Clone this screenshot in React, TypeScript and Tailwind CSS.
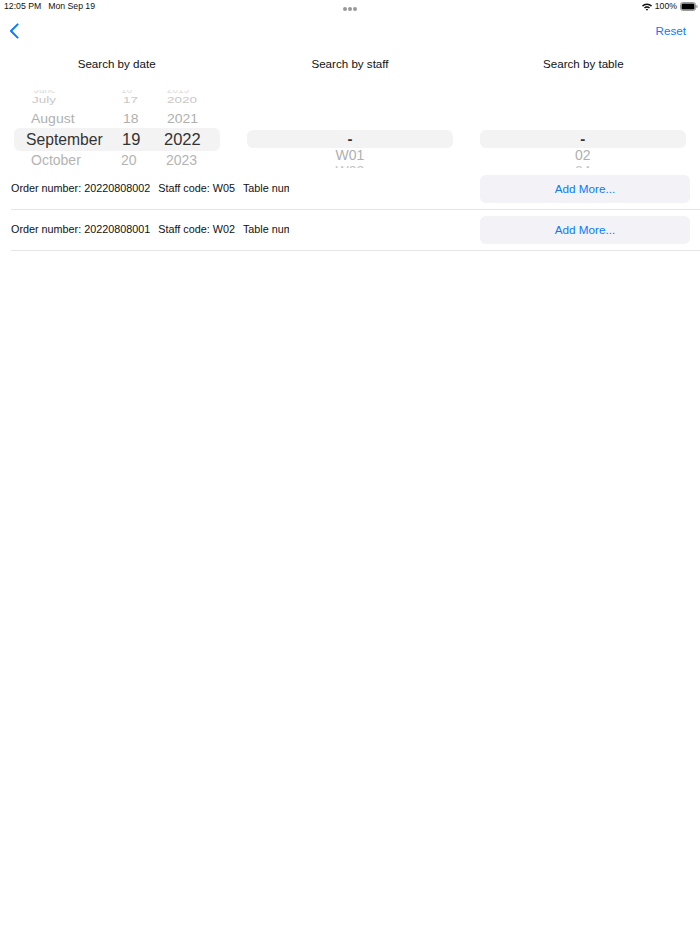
import React from "react";

const font = { fontFamily: '"Liberation Sans", Arial, sans-serif' };

function Chevron() {
  return (
    <svg width="10" height="16" viewBox="0 0 10 16" fill="none">
      <path d="M8.6 1.4 L2 8 L8.6 14.6" stroke="#0a7aff" strokeWidth="2" strokeLinecap="round" strokeLinejoin="round" />
    </svg>
  );
}

function Wifi() {
  return (
    <svg width="10" height="8" viewBox="0 0 10 8" fill="#111">
      <path d="M0 2.6C1.3 1.2 3 .4 5 .4s3.700.8 5 2.200L9 3.700C8 2.600 6.600 1.900 5 1.900S2 2.600 1 3.700Z" />
      <path d="M2 4.500C2.800 3.700 3.800 3.200 5 3.200s2.200.5 3 1.300L7 5.500C6.500 5 5.800 4.700 5 4.700S3.500 5 3 5.500Z" />
      <path d="M3.800 6.300C4.100 6 4.500 5.900 5 5.900s.9.1 1.200.4L5 7.700Z" />
    </svg>
  );
}

function Battery() {
  return (
    <svg width="18" height="9" viewBox="0 0 18 9">
      <rect x="0.5" y="0.5" width="15" height="8" rx="2" fill="none" stroke="#999" />
      <rect x="1.500" y="1.500" width="13" height="6" rx="1.200" fill="#000" />
      <rect x="16.300" y="3" width="1.200" height="3" rx="0.500" fill="#999" />
    </svg>
  );
}

function DateRow({ month, day, year, monthCls, dayCls, yearCls, rowCls }: { month: string; day: string; year: string; monthCls: string; dayCls: string; yearCls: string; rowCls: string }) {
  return (
    <div className={rowCls}>
      <span className={monthCls}>{month}</span>
      <span className={dayCls}>{day}</span>
      <span className={yearCls}>{year}</span>
    </div>
  );
}

function DatePicker() {
  return (
    <div className="relative h-[78px] overflow-hidden ml-[14px] w-[206px]">
      <div className="absolute left-0 right-0 top-[38px] h-[23px] rounded-md bg-[#f3f3f3]" />
      <div className="relative flex flex-col">
        <DateRow rowCls="flex h-[3px] items-start leading-[0px] overflow-hidden text-[10px] text-[#dcdcdc]" month="June" monthCls="w-[96px] pl-[20px]" day="16" dayCls="w-[45px] pl-[11px]" year="2019" yearCls="pl-[12px]" />
        <DateRow rowCls="flex h-[13px] mt-[1px] items-center text-[13.500px] text-[#c8c8c8] scale-y-[0.72]" month="July" monthCls="w-[96px] pl-[18px]" day="17" dayCls="w-[45px] pl-[13px]" year="2020" yearCls="pl-[12px]" />
        <DateRow rowCls="flex h-[19px] mt-[2px] items-center text-[14px] text-[#b0b0b0] scale-y-[0.95]" month="August" monthCls="w-[96px] pl-[17px]" day="18" dayCls="w-[45px] pl-[13px]" year="2021" yearCls="pl-[12px]" />
        <DateRow rowCls="flex h-[23px] mt-[0px] items-center text-[#333333]" month="September" monthCls="w-[96px] pl-[12px] text-[15.700px]" day="19" dayCls="w-[45px] pl-[12px] text-[16.500px]" year="2022" yearCls="pl-[9px] text-[16.500px]" />
        <DateRow rowCls="flex h-[19px] mt-[0px] items-center text-[14px] text-[#b4b4b4]" month="October" monthCls="w-[96px] pl-[17px]" day="20" dayCls="w-[45px] pl-[11px]" year="2023" yearCls="pl-[11px]" />
      </div>
    </div>
  );
}

function SimplePicker({ first, second, cls }: { first: string; second: string; cls: string }) {
  return (
    <div className={cls}>
      <div className="absolute left-0 right-0 top-[40px] h-[18px] rounded-md bg-[#f3f3f3]" />
      <div className="relative flex flex-col items-center pt-[40px]">
        <div className="h-[18px] leading-[18px] text-[15px] font-bold text-[#333333]">-</div>
        <div className="h-[15px] leading-[15px] text-[14px] text-[#b0b0b0]">{first}</div>
        <div className="h-[14px] mt-[1px] leading-[14px] text-[14px] text-[#c4c4c4]">{second}</div>
      </div>
    </div>
  );
}

function OrderRow({ order, staff, gapCls }: { order: string; staff: string; gapCls: string }) {
  return (
    <div className="flex h-[41px] items-center ml-[11px] border-b border-[#e4e4e4]">
      <div className="w-[278px] pb-[1px] overflow-hidden whitespace-nowrap text-[10.800px] text-[#111111]">
        <span>Order number: {order}</span>
        <span className={gapCls}>Staff code: {staff}</span>
        <span className="ml-[8px]">Table number: 01</span>
      </div>
      <div className="flex-1" />
      <button className="h-[28px] w-[210px] mr-[10px] rounded-md bg-[#f2f2f7] text-[11.700px] text-[#0a7aff]">Add More...</button>
    </div>
  );
}

export default function App() {
  return (
    <div className="w-[700px] h-[934px] bg-white overflow-hidden" style={font}>
      <div className="relative flex h-[14px] items-center justify-between pl-[4px] pr-[2px] text-[8.700px] text-[#111111]">
        <div className="flex gap-[7px]">
          <span>12:05 PM</span>
          <span>Mon Sep 19</span>
        </div>
        <div className="absolute left-[343px] top-[7px] flex gap-[1.500px]">
          <span className="h-[3.500px] w-[3.500px] rounded-full bg-[#999999]" />
          <span className="h-[3.500px] w-[3.500px] rounded-full bg-[#999999]" />
          <span className="h-[3.500px] w-[3.500px] rounded-full bg-[#999999]" />
        </div>
        <div className="flex items-center gap-[3px]">
          <Wifi />
          <span>100%</span>
          <Battery />
        </div>
      </div>
      <div className="flex h-[34px] items-center justify-between pl-[9px] pr-[14px]">
        <Chevron />
        <span className="text-[11.700px] text-[#0a7aff]">Reset</span>
      </div>
      <div className="grid grid-cols-3 h-[28px] items-center pt-[4px] text-center text-[11.600px] text-[#111111]">
        <span>Search by date</span>
        <span>Search by staff</span>
        <span>Search by table</span>
      </div>
      <div className="grid grid-cols-3 mt-[14px] pb-[1px]">
        <DatePicker />
        <SimplePicker first="W01" second="W02" cls="relative h-[78px] overflow-hidden mx-[14px]" />
        <SimplePicker first="02" second="04" cls="relative h-[78px] overflow-hidden ml-[13px] mr-[14px]" />
      </div>
      <OrderRow order="20220808002" staff="W05" gapCls="ml-[8px]" />
      <OrderRow order="20220808001" staff="W02" gapCls="ml-[8px]" />
    </div>
  );
}
